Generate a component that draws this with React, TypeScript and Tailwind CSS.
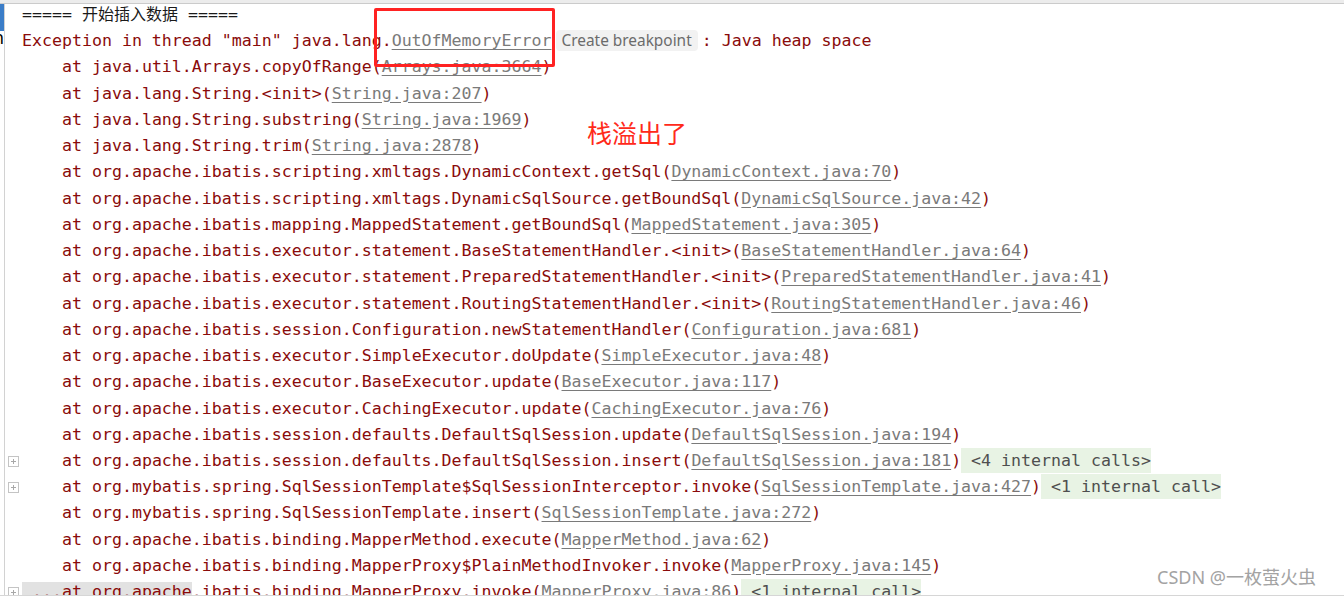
import React from 'react';

type Line = {
  pre: string;
  link: string;
  calls?: string;
  fold?: boolean;
};

const lines: Line[] = [
  { pre: 'at java.util.Arrays.copyOfRange', link: 'Arrays.java:3664' },
  { pre: 'at java.lang.String.<init>', link: 'String.java:207' },
  { pre: 'at java.lang.String.substring', link: 'String.java:1969' },
  { pre: 'at java.lang.String.trim', link: 'String.java:2878' },
  { pre: 'at org.apache.ibatis.scripting.xmltags.DynamicContext.getSql', link: 'DynamicContext.java:70' },
  { pre: 'at org.apache.ibatis.scripting.xmltags.DynamicSqlSource.getBoundSql', link: 'DynamicSqlSource.java:42' },
  { pre: 'at org.apache.ibatis.mapping.MappedStatement.getBoundSql', link: 'MappedStatement.java:305' },
  { pre: 'at org.apache.ibatis.executor.statement.BaseStatementHandler.<init>', link: 'BaseStatementHandler.java:64' },
  { pre: 'at org.apache.ibatis.executor.statement.PreparedStatementHandler.<init>', link: 'PreparedStatementHandler.java:41' },
  { pre: 'at org.apache.ibatis.executor.statement.RoutingStatementHandler.<init>', link: 'RoutingStatementHandler.java:46' },
  { pre: 'at org.apache.ibatis.session.Configuration.newStatementHandler', link: 'Configuration.java:681' },
  { pre: 'at org.apache.ibatis.executor.SimpleExecutor.doUpdate', link: 'SimpleExecutor.java:48' },
  { pre: 'at org.apache.ibatis.executor.BaseExecutor.update', link: 'BaseExecutor.java:117' },
  { pre: 'at org.apache.ibatis.executor.CachingExecutor.update', link: 'CachingExecutor.java:76' },
  { pre: 'at org.apache.ibatis.session.defaults.DefaultSqlSession.update', link: 'DefaultSqlSession.java:194' },
  { pre: 'at org.apache.ibatis.session.defaults.DefaultSqlSession.insert', link: 'DefaultSqlSession.java:181', calls: '<4 internal calls>', fold: true },
  { pre: 'at org.mybatis.spring.SqlSessionTemplate$SqlSessionInterceptor.invoke', link: 'SqlSessionTemplate.java:427', calls: '<1 internal call>', fold: true },
  { pre: 'at org.mybatis.spring.SqlSessionTemplate.insert', link: 'SqlSessionTemplate.java:272' },
  { pre: 'at org.apache.ibatis.binding.MapperMethod.execute', link: 'MapperMethod.java:62' },
  { pre: 'at org.apache.ibatis.binding.MapperProxy$PlainMethodInvoker.invoke', link: 'MapperProxy.java:145' },
];

function FoldIcon(): JSX.Element {
  return (
    <svg width="11" height="11" viewBox="0 0 11 11" className="block">
      <rect x="0.5" y="0.5" width="10" height="10" fill="#fff" stroke="#c4c4c4" />
      <path d="M3 5.5h5M5.5 3v5" stroke="#a8a8a8" strokeWidth="1" />
    </svg>
  );
}

function Gutter({ fold }: { fold?: boolean }): JSX.Element {
  return (
    <div className="w-[17px] h-[26.23px] flex items-center justify-center shrink-0">
      {fold && <FoldIcon />}
    </div>
  );
}

function Link({ children }: { children: React.ReactNode }): JSX.Element {
  return <span className="text-[#7a7a7a] underline decoration-[#7a7a7a] underline-offset-[3px]">{children}</span>;
}

function App(): JSX.Element {
  const red = 'text-[#8a0b0b]';
  return (
    <div className="relative w-[1344px] h-[598px] overflow-hidden bg-white">
      <div className="flex flex-col h-full">
        <div className="h-[3px] bg-[#ececec] shrink-0" />
        <div className="h-[1px] bg-[#cbcbcb] shrink-0" />
        <div className="flex flex-1 min-h-0">
          {/* left edge of neighbouring panel */}
          <div className="w-[4px] shrink-0 flex flex-col overflow-hidden">
            <div className="h-[27px] bg-[#3b7dc8]" />
            <div className="h-[16px] mt-[1px] relative overflow-hidden">
              <span className="absolute right-0 top-[-6px] text-[17px] text-black font-['DejaVu_Sans',sans-serif]">n</span>
            </div>
          </div>
          <div className="w-[1px] bg-[#d2d2d2] shrink-0" />
          <div className="flex-1 -mt-[4px] font-['DejaVu_Sans_Mono',monospace] text-[16.6px] leading-[26.23px] whitespace-pre">
            <div className="flex">
              <Gutter />
              <span className="text-[#1a1a1a]">
                {'===== '}
                <span className="font-['Noto_Sans_CJK_SC',sans-serif] text-[16px]">开始插入数据</span>
                {' ====='}
              </span>
            </div>
            <div className="flex">
              <Gutter />
              <span className={red}>
                Exception in thread "main" java.lang.<Link>OutOfMemoryError</Link>
                <span className="inline-block align-middle mx-[4px] px-[6px] h-[21px] leading-[21px] rounded-[4px] bg-[#f2f2f2] text-[#6b6b6b] text-[15.4px] font-['Noto_Sans',sans-serif] -translate-y-[1px]">
                  Create breakpoint
                </span>
                : Java heap space
              </span>
            </div>
            {lines.map((l) => (
              <div className="flex" key={l.pre + l.link}>
                <Gutter fold={l.fold} />
                <span className={red}>
                  {'    '}
                  {l.pre}(<Link>{l.link}</Link>)
                  {l.calls && (
                    <span className="inline-block bg-[#e8f3e4] text-[#4f4f4f] leading-[25px]">{' ' + l.calls}</span>
                  )}
                </span>
              </div>
            ))}
            <div className="flex">
              <Gutter fold />
              <span className={red}>
                <span className="bg-[#e2e2e2]">
                  {' ...at org.apache'}
                </span>
                .ibatis.binding.MapperProxy.invoke(<Link>MapperProxy.java:86</Link>)
                <span className="inline-block bg-[#e8f3e4] text-[#4f4f4f] leading-[25px]">{' <1 internal call>'}</span>
              </span>
            </div>
          </div>
        </div>
      </div>

      {/* annotations drawn over the screenshot */}
      <div className="absolute left-[374px] top-[8px] w-[181px] h-[59px] border-[3px] border-[#ff2222] rounded-[2px]" />
      <div className="absolute left-[587px] top-[115px] text-[25px] leading-[34px] text-[#ff2a1a] font-['Noto_Sans_CJK_SC',sans-serif]">
        栈溢出了
      </div>
      <div className="absolute left-[1157px] top-[564px] text-[18px] leading-[26px] text-[#a3a3a3] font-['Noto_Sans','Noto_Sans_CJK_SC',sans-serif]">
        CSDN @一枚萤火虫
      </div>
      <div className="absolute left-0 right-0 bottom-0 h-[3px] bg-white border-t border-[#d6d6d6]" />
    </div>
  );
}

export default App;
